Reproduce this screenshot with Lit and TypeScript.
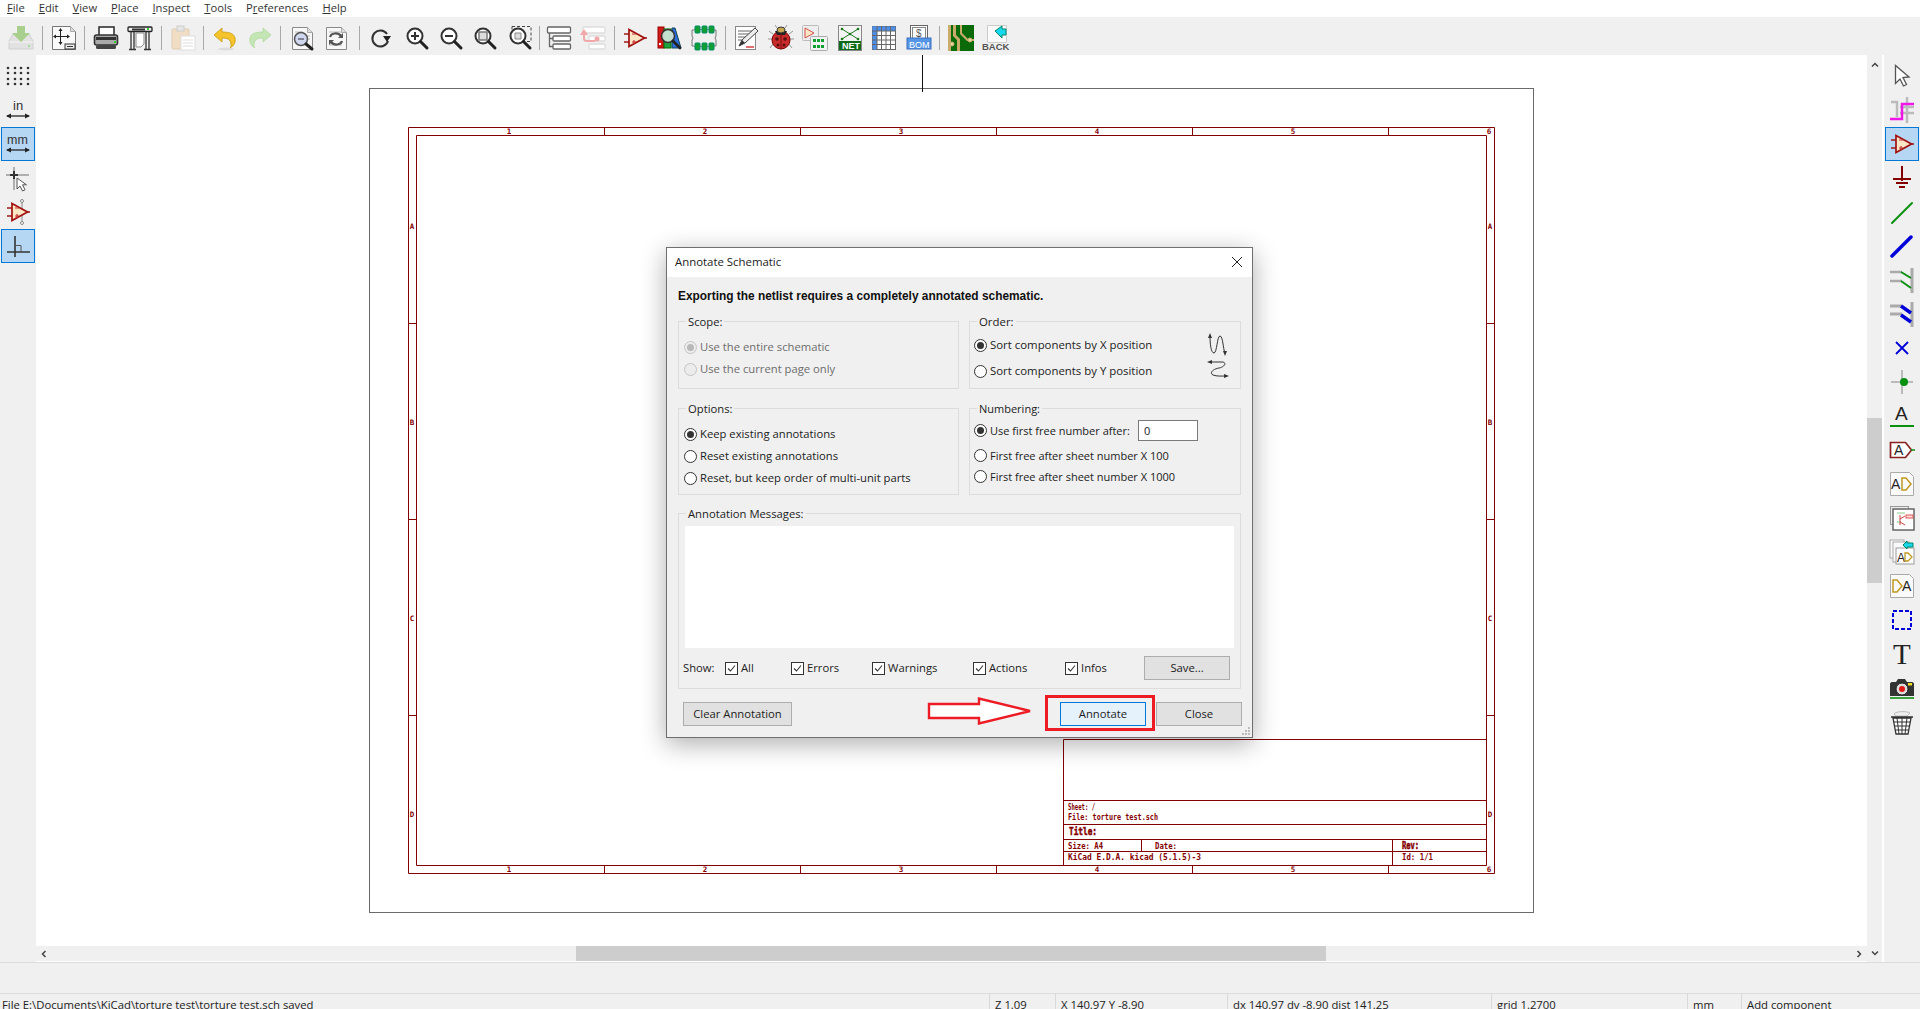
import { LitElement, html, css, svg } from "lit";
import { customElement } from "lit/decorators.js";

const R = "#840000";
const opamp = (dx = 0, dy = 0) => svg`<g transform="translate(${dx} ${dy})">
  <path d="M2 9h5M2 17h5M22 13h3" stroke="#a01818" stroke-width="1.6" fill="none"/>
  <path d="M7 4.5 22.5 13 7 21.5Z" fill="#fbe6c6" stroke="#a01010" stroke-width="1.7"/>
  <path d="M10 9h4M10 17h4M12 15v4" stroke="#c43030" stroke-width="1.2"/></g>`;
const mag = (inner: unknown) => svg`<circle cx="11" cy="11" r="7.5" fill="#fff" stroke="#333" stroke-width="2"/>${inner}
  <path d="M16.5 16.5 23 23" stroke="#222" stroke-width="3" stroke-linecap="round"/>`;
const page = svg`<path d="M3.5 2.5h15l5 5v17h-20Z" fill="#f7f7f7" stroke="#8a8a8a"/><path d="M18.500 2.500v5h5" fill="#ddd" stroke="#aaa"/>`;
const T = (x: number, y: number, s: string, fs: number, fill: string, w = 700) =>
  svg`<text x=${x} y=${y} font-family="Liberation Sans" font-size=${fs} font-weight=${w} fill=${fill}>${s}</text>`;

const I: Record<string, unknown> = {
  save: svg`<path d="M1 16 5 9h16l4 7v8H1Z" fill="#e2e2e2" stroke="#d0d0d0"/><path d="M1 17h24" stroke="#f5f5f5"/><rect x="20" y="20" width="2" height="2" fill="#9fdc9f"/><path d="M9 1h8v7h5l-9 9-9-9h5Z" fill="#a9cf8e"/>`,
  fit: svg`<path d="M1.500 1.500h18l5 5v18h-23Z" fill="#fafafa" stroke="#777"/><path d="M19.500 1.500v5h5" fill="#ddd" stroke="#aaa"/><path d="M9.500 4v15M3 11.500h15" stroke="#222"/><path d="M9.500 3l-2 3h4ZM9.500 20l-2-3h4ZM2 11.500l3-2v4ZM19 11.500l-3-2v4Z" fill="#222"/><rect x="14" y="19" width="10" height="5" fill="#eee" stroke="#333"/><path d="M16 21.500h6" stroke="#333"/>`,
  print: svg`<rect x="6" y="2" width="15" height="9" fill="#fff" stroke="#333" stroke-width="1.6"/><rect x="1.500" y="10" width="23" height="10" rx="2" fill="#aaa" stroke="#333" stroke-width="1.6"/><rect x="3" y="12" width="20" height="3" fill="#333"/><rect x="21" y="16" width="2" height="2" fill="#3c3"/><rect x="3" y="20" width="20" height="4" rx="1.500" fill="#444"/>`,
  plotter: svg`<rect x="1" y="2" width="24" height="4.500" rx="1" fill="#eee" stroke="#222" stroke-width="1.300"/><rect x="5" y="3.500" width="13" height="2" fill="#333"/><rect x="20" y="3" width="2" height="2" fill="#3c3"/><path d="M4 7v17M7 7v17M19 7v17M22 7v17" stroke="#333" stroke-width="1.300"/><path d="M9 8h8v11l-3 3H9Z" fill="#fff" stroke="#888"/><path d="M2 24.500h7M17 24.500h7" stroke="#333" stroke-width="1.500"/>`,
  paste: svg`<rect x="2" y="4" width="17" height="20" rx="1" fill="#f1dcc4" stroke="#e3cdb2"/><rect x="7" y="1" width="7" height="5" fill="#e6e6e6" stroke="#ccc"/><rect x="11" y="11" width="14" height="14" fill="#fff" stroke="#ddd"/><path d="M13 15h10M13 18h10M13 21h10" stroke="#ddd"/>`,
  undo: svg`<path d="M10 3 2 10l8 7v-4c5 0 9 1 9 7 0 1 0 2-1 3 4-2 6-6 5-10-1-5-7-6-13-6Z" fill="#f5c32c" stroke="#c89a10" stroke-width=".8"/><ellipse cx="14" cy="24" rx="8" ry="1.500" fill="#ddd"/>`,
  redo: svg`<path d="M16 3l8 7-8 7v-4c-5 0-9 1-9 7 0 1 0 2 1 3-4-2-6-6-5-10 1-5 7-6 13-6Z" fill="#c4e6b4" stroke="#b0d8a0" stroke-width=".8"/>`,
  find: svg`${page}<path d="M6 7h8M6 10h3M6 13h3M6 16h3M18 11h3M18 14h3" stroke="#bbb"/><circle cx="12" cy="14" r="6.500" fill="#cfd8ee" stroke="#555" stroke-width="1.500"/><path d="M9 14h6" stroke="#667" stroke-width="1.500"/><path d="M17 19l6 5" stroke="#222" stroke-width="3" stroke-linecap="round"/>`,
  replace: svg`${page}<path d="M6 7h13M6 20h13" stroke="#bbb"/><path d="M7 12c1-4 8-5 11-1" fill="none" stroke="#555" stroke-width="2.200"/><path d="M20 8v5h-5Z" fill="#555"/><path d="M19 16c-1 4-8 5-11 1" fill="none" stroke="#555" stroke-width="2.200"/><path d="M6 20v-5h5Z" fill="#555"/>`,
  refresh: svg`<path d="M19 9A8 8 0 1 0 20 16" transform="translate(-1 0)" fill="none" stroke="#333" stroke-width="2"/><path d="M14 11h8l-4 6Z" fill="#222"/>`,
  zin: svg`${mag(svg`<path d="M7 11h8M11 7v8" stroke="#333" stroke-width="2"/>`)}`,
  zout: svg`${mag(svg`<path d="M7 11h8" stroke="#333" stroke-width="2"/>`)}`,
  zfit: svg`${mag(svg`<rect x="7" y="7" width="8" height="8" fill="#ddd" stroke="#777" stroke-width="1.500"/>`)}`,
  zsel: svg`<rect x="5" y="1.500" width="19" height="15" fill="none" stroke="#444" stroke-dasharray="3 2"/>${mag(svg`<path d="M8 8h6v6H8Z" fill="#ddd" stroke="#888"/>`)}`,
  hier: svg`<rect x="1.500" y="2" width="23" height="6" rx="1" fill="#fff" stroke="#666" stroke-width="1.300"/><rect x="7" y="11" width="17.500" height="5" rx="1" fill="#fff" stroke="#666" stroke-width="1.300"/><rect x="7" y="19" width="17.500" height="5" rx="1" fill="#fff" stroke="#666" stroke-width="1.300"/><path d="M3.500 8v13.500H7M3.500 13.500H7" fill="none" stroke="#666" stroke-width="1.300"/>`,
  leave: svg`<rect x="3" y="2" width="22" height="6" rx="1" fill="#fff" stroke="#ddd" stroke-width="1.300"/><rect x="9" y="11" width="16" height="5" rx="1" fill="#fff" stroke="#ddd" stroke-width="1.300"/><rect x="9" y="19" width="16" height="5" rx="1" fill="#fff" stroke="#ddd" stroke-width="1.300"/><path d="M4 8v5.500c0 2 1 2.500 3 2.500h8" fill="none" stroke="#f0a8a8" stroke-width="2"/><path d="M4 4 0 10h8Z" fill="#f0a8a8"/><circle cx="17" cy="14" r="2.500" fill="#f0a8a8"/>`,
  symbol: opamp(0, 0),
  lib: svg`<rect x="1" y="2" width="6" height="21" fill="#d01818" stroke="#900"/><rect x="7" y="4" width="7" height="19" fill="#20a040" stroke="#070"/><path d="M15 23 15 3h3l6 20Z" fill="#2a6fdc" stroke="#145"/><circle cx="11" cy="11" r="6.500" fill="#dff0e8" fill-opacity=".85" stroke="#333" stroke-width="1.500"/><path d="M16 16l7 7" stroke="#222" stroke-width="2.800" stroke-linecap="round"/><rect x="2" y="18" width="2" height="2" fill="#fff"/>`,
  fp: svg`<path d="M3 5H1v6l1 2-1 2v6h2M23 5h2v6l-1 2 1 2v6h-2" fill="none" stroke="#777"/><path d="M3 4.500h20M3 21.500h20" stroke="#888"/>${[4, 11, 18].map((x) => svg`<rect x=${x} y="1" width="5" height="7" rx=".8" fill="#10a030" stroke="#086"/><rect x=${x} y="18" width="5" height="7" rx=".8" fill="#10a030" stroke="#086"/>`)}`,
  annot: svg`<rect x="1.500" y="1.500" width="20" height="23" fill="#fff" stroke="#888"/><path d="M4 6h14M4 9h12M4 12h10M4 15h7" stroke="#666"/><path d="M5 21 8 15 21 3l3 3-13 12Z" fill="#eee" stroke="#444"/><path d="M5 21l3-6 3 3Z" fill="#333"/><path d="M12 22h8" stroke="#d01010" stroke-width="1.200"/>`,
  bug: svg`<path d="M5 9 1 6M4 14H0M5 19l-3 4M21 9l4-3M22 14h4M21 19l3 4M9 3 7 0M17 3l2-3" stroke="#999" fill="none"/><ellipse cx="13" cy="15" rx="9" ry="9" fill="#c92a2a" stroke="#700"/><path d="M7 6h12l-2 4H9Z" fill="#222"/><ellipse cx="13" cy="5" rx="4" ry="3" fill="#c8a850" stroke="#333"/><circle cx="9" cy="14" r="1.800" fill="#511"/><circle cx="17" cy="14" r="1.800" fill="#511"/><circle cx="10" cy="20" r="1.500" fill="#511"/><circle cx="16" cy="20" r="1.500" fill="#511"/><path d="M13 9v15" stroke="#711"/>`,
  assign: svg`<rect x="0.500" y="0.500" width="16" height="15" rx="1" fill="#eee" stroke="#bbb"/><path d="M3 3 12 8 3 13Z" fill="#fbe6c6" stroke="#d05050"/><rect x="8.500" y="11.500" width="17" height="14" rx="1" fill="#f2f2f2" stroke="#aaa"/>${[11, 15, 19].map((x) => svg`<rect x=${x} y="14" width="3" height="3" fill="#10a030"/><rect x=${x} y="20" width="3" height="3" fill="#10a030"/>`)}`,
  net: svg`<rect x="1.500" y="0.500" width="23" height="25" fill="#f4f4f4" stroke="#888"/><path d="M5 4 13 9 21 4M5 14l8-5 8 5" fill="none" stroke="#1a7a1a"/><circle cx="5" cy="4" r="1.300" fill="#1a7a1a"/><circle cx="21" cy="4" r="1.300" fill="#1a7a1a"/><circle cx="13" cy="9" r="1.300" fill="#1a7a1a"/><circle cx="5" cy="14" r="1.300" fill="#1a7a1a"/><circle cx="21" cy="14" r="1.300" fill="#1a7a1a"/><rect x="2" y="16" width="22" height="9" fill="#0c6a18"/>${T(5, 24, "NET", 9, "#fff")}`,
  table: svg`<rect x="1.500" y="1.500" width="23" height="23" fill="#fff" stroke="#666"/><rect x="1.500" y="1.500" width="23" height="4.500" fill="#4d8ee8"/><rect x="1.500" y="1.500" width="4.500" height="23" fill="#4d8ee8"/><path d="M6 1v24M10.500 1v24M15 1v24M19.500 1v24M1 6h24M1 10.500h24M1 15h24M1 19.500h24" stroke="#666"/>`,
  bom: svg`<rect x="4.500" y="0.500" width="17" height="15" fill="#fff" stroke="#666"/><rect x="6.500" y="2.500" width="13" height="11" fill="none" stroke="#888"/>${T(10, 12, "$", 10, "#555", 400)}<rect x="1" y="13" width="24" height="11" fill="#5596e6" stroke="#3a6fc0"/>${T(3, 23, "BOM", 9, "#fff", 400)}`,
  pcb: svg`<rect x="0" y="0" width="26" height="26" fill="#0a6a0a"/><path d="M0 0h3v26H0ZM5 0h3v10l4 4v12H9V15L5 11ZM12 0h2v8l6 6h6v2h-7l-7-7Z" fill="#c9ab6a"/><circle cx="22" cy="15" r="2" fill="#e8d8a8" stroke="#c9ab6a"/><circle cx="4" cy="19" r="2" fill="#e8d8a8" stroke="#c9ab6a"/>`,
  back: svg`<path d="M5.500 0.500h19v17h-19Z" fill="#fafafa" stroke="#ccc"/><path d="M14 6l7-5v3h4v6h-4v3Z" transform="translate(-1 0)" fill="#18d8f0" stroke="#086"/>${T(0, 25, "BACK", 9.500, "#555")}`,
  grid: svg`${[5, 10, 16, 21].map((y) => [3, 10, 16, 23].map((x) => svg`<circle cx=${x} cy=${y} r="1.300" fill="#333"/>`))}`,
  inch: svg`${T(8, 13, "in", 13, "#333", 400)}<path d="M2 19h22" stroke="#222" stroke-width="1.300"/><path d="M1 19l5-2.500v5ZM25 19l-5-2.500v5Z" fill="#222"/>`,
  mm: svg`${T(2, 13, "mm", 12.500, "#333", 400)}<path d="M2 19h22" stroke="#222" stroke-width="1.300"/><path d="M1 19l5-2.500v5ZM25 19l-5-2.500v5Z" fill="#222"/>`,
  cross: svg`<path d="M1 10h23M9 2v23" stroke="#999" stroke-width="1.500"/><path d="M5 10h8M9 6v8" stroke="#333" stroke-width="2"/><path d="M12 13v11l3-3 2.500 5 2.500-1.200-2.500-5h4Z" fill="#fff" stroke="#555"/>`,
  pin: svg`<path d="M17 1v24" stroke="#aaa" stroke-width="1.500"/><circle cx="17" cy="2" r="1.500" fill="#fff" stroke="#888"/><circle cx="17" cy="24" r="1.500" fill="#fff" stroke="#888"/>${opamp(0, 0)}`,
  angle: svg`<path d="M2 19h23M10 3v21" stroke="#333" stroke-width="1.600"/><path d="M10 12.500h6v6.500" fill="none" stroke="#555"/>`,
  arrow: svg`<path d="M6.500 2.500v18l4.500-4.500 3.500 7 3-1.500-3.500-7 6-.5Z" fill="#fff" stroke="#555" stroke-width="1.300"/>`,
  bentry: svg`<path d="M2 5h6v15M18 0v26M11 16h14M11 10h14" stroke="#bbb" stroke-width="2.500" fill="none"/><path d="M1 22h12V7h12" stroke="#f018e8" stroke-width="2.500" fill="none"/>`,
  ground: svg`<path d="M13 1v15M4 14h18M7 18h12M10 22h6" stroke="#840000" stroke-width="2" fill="none"/>`,
  wire: svg`<path d="M3 24 23 4" stroke="#0a9010" stroke-width="2" stroke-linecap="round"/>`,
  bus: svg`<path d="M3 23 22 4" stroke="#0000d8" stroke-width="3.500" stroke-linecap="round"/>`,
  wentry: svg`<path d="M23 1v25" stroke="#aaa" stroke-width="3"/><path d="M1 5h12M1 14h12" stroke="#aaa" stroke-width="2.500"/><path d="M12 5l10 6M12 14l10 7" stroke="#0a9010" stroke-width="2"/>`,
  bbentry: svg`<path d="M23 1v25" stroke="#aaa" stroke-width="3"/><path d="M1 5h12M1 13h12" stroke="#aaa" stroke-width="3"/><path d="M12 5l10 7M12 14l10 7" stroke="#0000d8" stroke-width="3.500"/>`,
  nc: svg`<path d="M7 7l12 12M19 7 7 19" stroke="#0000d8" stroke-width="1.800"/>`,
  junction: svg`<path d="M2 13h22M13 1v24" stroke="#bbb" stroke-width="2"/><circle cx="15" cy="13" r="4" fill="#0a9010"/>`,
  netname: svg`${T(6, 17, "A", 19, "#222", 400)}<path d="M1 23h24" stroke="#0a9010" stroke-width="2"/>`,
  label: svg`<path d="M1.500 5.500h15l6 7.500-6 7.500h-15Z" fill="#fff" stroke="#8a2020" stroke-width="1.700"/><path d="M22 13h4" stroke="#0a9010" stroke-width="1.500"/>${T(5, 18, "A", 14, "#222", 400)}`,
  glabel: svg`<path d="M1.500 1.500h19l4 4v19h-23Z" fill="#fafafa" stroke="#aaa"/>${T(2, 18, "A", 14, "#222", 400)}<path d="M13 7h4l5 6-5 6h-4Z" fill="none" stroke="#c09820" stroke-width="1.500"/>`,
  hsheet: svg`<rect x="1.500" y="1.500" width="18" height="18" fill="#eee" stroke="#999"/><rect x="4" y="4" width="21" height="21" fill="#fff" stroke="#666" stroke-width="1.500"/><path d="M8 8h8M8 17h4" stroke="#8c8"/><path d="M11 10v10M11 14l5-3M11 17l5 3" stroke="#c44"/><rect x="17" y="10" width="7" height="3" fill="#fdd" stroke="#d55"/>`,
  hpin: svg`<rect x="1" y="1" width="14" height="18" fill="#fafafa" stroke="#aaa"/><rect x="4" y="3" width="16" height="20" fill="#fafafa" stroke="#aaa"/><rect x="7" y="9" width="18" height="16" fill="#fff" stroke="#999"/><path d="M18 10l-4-4 4-4v2h6v4h-6Z" fill="#18d8f0" stroke="#086"/>${T(8, 23, "A", 12, "#222", 400)}<path d="M16 14h3l4 4-4 4h-3Z" fill="none" stroke="#c09820" stroke-width="1.300"/>`,
  import: svg`<path d="M1.500 1.500h19l4 4v19h-23Z" fill="#fafafa" stroke="#aaa"/><path d="M4 7h4l5 6-5 6H4Z" fill="none" stroke="#c09820" stroke-width="1.500"/>${T(13, 18, "A", 14, "#222", 400)}`,
  rect: svg`<rect x="4" y="4" width="18" height="18" fill="none" stroke="#0000d8" stroke-width="2" stroke-dasharray="4 2"/>`,
  text: svg`<text x="4" y="23" font-family="Liberation Serif" font-size="29" font-weight="400" fill="#222">T</text>`,
  camera: svg`<path d="M1 9c0-1 1-2 2-2h4l2-3h7l2 3h5c1 0 2 1 2 2v12H1Z" fill="#333"/><rect x="19" y="8" width="4" height="2.500" fill="#f0e020"/><circle cx="13" cy="14" r="6" fill="#ddd" stroke="#222"/><circle cx="13" cy="14" r="3" fill="#e01818"/><path d="M1 23h24" stroke="#0a9010" stroke-width="1.600"/>`,
  trash: svg`<path d="M5 5c2-3 13-3 16-1l-3 3H7Z" fill="#eee" stroke="#bbb"/><path d="M2 8h22M4 9h18l-3 16H7Z" fill="#fff" stroke="#333" stroke-width="1.300"/><path d="M8 9l2 16M13 9v16M18 9l-2 16M5 13h16M6 17h14M6.500 21h13" stroke="#333"/>`,
};

const topBar = ["save", "|", "fit", "|", "print", "plotter", "|", "paste", "|", "undo", "redo", "|", "find", "replace", "|+", "refresh", "zin", "zout", "zfit", "zsel", "|-", "hier", "leave", "|", "symbol", "lib", "fp", "|", "annot", "bug", "assign", "net", "table", "bom", "|", "pcb", "back"];
const leftBar = [["grid"], ["inch"], ["mm", 1], ["cross"], ["pin"], ["angle", 1]];
const rightBar = [["arrow"], ["bentry"], ["symbol", 1], ["ground"], ["wire"], ["bus"], ["wentry"], ["bbentry"], ["nc"], ["junction"], ["netname"], ["label"], ["glabel"], ["hsheet"], ["hpin"], ["import"], ["rect"], ["text"], ["camera"], ["trash"]];
const menus: [string, string, string][] = [["", "F", "ile"], ["", "E", "dit"], ["", "V", "iew"], ["", "P", "lace"], ["", "I", "nspect"], ["", "T", "ools"], ["P", "r", "eferences"], ["", "H", "elp"]];
const ic = (n: string) => html`<svg class="ic" viewBox="0 0 26 26" width="26" height="26">${I[n]}</svg>`;

// Sheet drawing, in page coordinates
const seg: number[][] = [
  [408, 127, 1494, 127], [408, 873, 1494, 873], [408, 127, 408, 873], [1494, 127, 1494, 873],
  [416, 135, 1486, 135], [416, 865, 1486, 865], [416, 135, 416, 865], [1486, 135, 1486, 865],
  ...[604, 800, 996, 1192, 1388].flatMap((x) => [[x, 127, x, 135], [x, 865, x, 873]]),
  ...[323, 519, 715].flatMap((y) => [[408, y, 416, y], [1486, y, 1494, y]]),
  [1063, 739, 1486, 739], [1063, 739, 1063, 865], [1063, 800, 1486, 800], [1063, 824, 1486, 824],
  [1063, 839, 1486, 839], [1063, 851, 1486, 851], [1141, 839, 1141, 851], [1392, 839, 1392, 865],
];
const sheetLabels: [number, number, string][] = [
  ...[1, 2, 3, 4, 5, 6].flatMap((n, i): [number, number, string][] => {
    const x = i === 5 ? 1489 : 509 + i * 196;
    return [[x, 134, String(n)], [x, 872, String(n)]];
  }),
  ...["A", "B", "C", "D"].flatMap((s, i): [number, number, string][] => [[412, 229 + i * 196, s], [1490, 229 + i * 196, s]]),
];
const tb: [number, number, string, number, number][] = [
  [1068, 810, "Sheet: /", 27, 0], [1068, 820, "File: torture test.sch", 90, 0],
  [1068, 849, "Size: A4", 35, 0], [1155, 849, "Date:", 22, 0],
  [1068, 860, "KiCad E.D.A.  kicad (5.1.5)-3", 133, 0], [1402, 860, "Id: 1/1", 31, 0],
  [1069, 835, "Title:", 28, 1], [1402, 849, "Rev:", 17, 1],
];

@customElement("app-root")
export class AppRoot extends LitElement {
  static styles = css`
    :host { display: flex; flex-direction: column; width: 1920px; height: 1009px; overflow: hidden; background: #f0f0f0; font: 11.25px/16px "Open Sans", sans-serif; color: #1a1a1a; }
    * { box-sizing: border-box; }
    .menu { display: flex; height: 17px; flex: none; background: #fff; padding-left: 7px; gap: 14px; line-height: 16px; font-size: 11.2px; color: #333; }
    .menu u { text-underline-offset: 1px; }
    .top { display: flex; align-items: center; height: 38px; flex: none; padding: 3px 0 0 4px; background: #f0f0f0; }
    .btn { width: 34.4px; height: 34px; flex: none; display: flex; align-items: center; justify-content: center; }
    .sep { width: 8px; height: 24px; flex: none; display: flex; justify-content: center; }
    .sep::after { content: ""; width: 1px; background: #a8a8a8; }
    .sep.wide { width: 11.5px; } .sep.thin { width: 4.5px; }
    .mid { flex: 1 1 0; display: flex; min-height: 0; }
    .side { width: 36px; flex: none; padding-top: 4px; display: flex; flex-direction: column; background: #f0f0f0; }
    .side .btn { width: 36px; height: 34px; }
    .side .on::before { content: ""; position: absolute; width: 32px; height: 32px; background: #b6d7f4; border: 1px solid #0078d7; }
    .ic { position: relative; display: block; overflow: visible; }
    .centre { flex: 1; display: flex; flex-direction: column; min-width: 0; }
    .canvas { flex: 1; position: relative; background: #fff; overflow: hidden; min-height: 0; }
    .canvas svg.drawing { position: absolute; inset: 0; font-family: "DejaVu Sans Mono", monospace; }
    .hbar { height: 16px; flex: none; background: #f0f0f0; border-bottom: 1px solid #fff; display: flex; align-items: center; position: relative; }
    .hthumb { position: absolute; left: 540px; width: 750px; top: 0; height: 15px; background: #cdcdcd; }
    .chev { width: 8px; height: 8px; flex: none; }
    .hbar .l { margin-left: 4px; } .hbar .r { margin-left: auto; margin-right: 4px; }
    .vbar { width: 17px; flex: none; background: #f0f0f0; border-right: 2px solid #fff; display: flex; flex-direction: column; align-items: center; justify-content: space-between; padding: 6px 0 5px; position: relative; }
    .vthumb { position: absolute; left: 0; width: 15px; top: 363px; height: 165px; background: #cdcdcd; }
    .gap { height: 32px; flex: none; background: #f0f0f0; border-top: 1px solid #dcdcdc; border-bottom: 1px solid #dcdcdc; }
    .status { height: 15px; flex: none; display: flex; background: #f0f0f0; overflow: hidden; white-space: nowrap; font-size: 11.3px; color: #222; }
    .status div { padding: 3px 0 0 5px; border-left: 1px solid #d9d9d9; flex: none; }
    .status div:first-child { border: 0; padding-left: 2px; width: 989px; }
    .f1 { width: 66px; } .f2 { width: 172px; } .f3 { width: 264px; } .f4 { width: 196px; } .f5 { width: 54px; } .f6 { width: 179px; }

    .dlg { position: absolute; left: 666px; top: 247px; width: 587px; height: 491px; background: #f0f0f0; border: 1px solid #6f6f6f; box-shadow: 0 6px 24px rgba(0,0,0,.32); display: flex; flex-direction: column; color: #222; }
    .title { height: 29px; flex: none; background: #fff; display: flex; align-items: center; justify-content: space-between; padding: 0 9px 2px 8px; font-size: 11.4px; }
    .body { flex: 1; padding: 11px 11px 0; display: flex; flex-direction: column; }
    .head { height: 16px; font: 700 11.9px/16px "Liberation Sans", sans-serif; color: #111; margin-bottom: 17px; }
    .cols { display: grid; grid-template-columns: 281px 272px; column-gap: 10px; margin-bottom: 19px; }
    .cols.tail { margin-bottom: 18px; }
    .grp { position: relative; border: 1px solid #dcdcdc; }
    .lg { position: absolute; top: -8px; left: 7px; background: #f0f0f0; padding: 0 2px; line-height: 16px; }
    .h68 { height: 68px; } .h87 { height: 87px; }
    .p14 { padding: 14px 0 0 5px; } .p10 { padding: 10px 0 0 4px; font-size: 11.4px; } .p12 { padding: 11px 0 0 4px; font-size: 11px; }
    .row { display: flex; align-items: center; gap: 3px; height: 22px; }
    .r26 { height: 26px; padding-right: 11px; }
    .r21 { height: 21px; } .mt4 { margin-top: 4px; }
    .off { color: #6d6d6d; }
    .radio { width: 13px; height: 13px; border-radius: 50%; border: 1px solid #333; background: #fff; flex: none; position: relative; }
    .radio.c::after { content: ""; position: absolute; inset: 2px; border-radius: 50%; background: #333; }
    .off .radio { border-color: #c4c4c4; background: #ececec; }
    .off .radio.c::after { background: #b8b8b8; }
    .push { margin-left: auto; }
    .num { width: 60px; height: 21px; border: 1px solid #7a7a7a; background: #fff; margin-left: auto; margin-right: 42px; padding-left: 5px; line-height: 19px; }
    .msgs { height: 176px; padding: 12px 5px 0 4px; margin-bottom: 13px; }
    .white { height: 122px; margin: 0 1px 8px 2px; background: #fff; }
    .show { display: grid; grid-template-columns: 42px 66px 81px 101px 92px 79px 86px; align-items: center; height: 24px; }
    .cb { display: flex; align-items: center; gap: 3px; }
    .box { width: 13px; height: 13px; border: 1px solid #333; background: #fff; display: block; flex: none; }
    button { font: inherit; color: #222; height: 24px; background: #e1e1e1; border: 1px solid #adadad; padding: 0; display: block; }
    .foot { display: flex; padding-left: 5px; margin-right: -1px; gap: 10px; }
    .foot .clear { width: 109px; margin-right: auto; }
    .foot .b86 { width: 86px; }
    .foot .def { background: #e5f1fb; border-color: #0078d7; }
    .redbox { position: absolute; left: 378px; top: 447px; width: 110px; height: 36px; border: 3px solid #ed1c24; }
    .arrow { position: absolute; left: 260px; top: 449px; }
    .grip { position: absolute; right: 1px; bottom: 1px; }
  `;

  side(items: unknown[][]) {
    return items.map(([n, on]) => html`<div class="btn ${on ? "on" : ""}">${ic(n as string)}</div>`);
  }

  render() {
    const chev = (d: string, c: string) => html`<svg class="chev ${c}" viewBox="0 0 8 8"><path d=${d} fill="none" stroke="#444" stroke-width="1.500"/></svg>`;
    const radio = (label: string, c = false, cls = "") => html`<div class="row ${cls}"><span class="radio ${c ? "c" : ""}"></span>${label}</div>`;
    const check = (label: string) => html`<div class="cb"><svg class="box" viewBox="0 0 11 11"><path d="M2 5.500 4.500 8 9 2.500" fill="none" stroke="#333" stroke-width="1.100"/></svg>${label}</div>`;
    const sepClass: Record<string, string> = { "|": "sep", "|+": "sep wide", "|-": "sep thin" };
    return html`
      <div class="menu">${menus.map(([a, u, b]) => html`<span>${a}<u>${u}</u>${b}</span>`)}</div>
      <div class="top">${topBar.map((n) => (sepClass[n] ? html`<div class=${sepClass[n]}></div>` : html`<div class="btn">${ic(n)}</div>`))}</div>
      <div class="mid">
        <div class="side">${this.side(leftBar)}</div>
        <div class="centre">
          <div class="canvas">
            <svg class="drawing" width="1831" height="891" viewBox="36 55 1831 891">
              <rect x="369.500" y="88.500" width="1164" height="824" fill="none" stroke="#6a6a6a"/>
              <path d="M922.500 55v37" stroke="#111"/>
              ${seg.map(([a, b, c, d]) => svg`<line x1=${a + 0.5} y1=${b + 0.5} x2=${c + 0.5} y2=${d + 0.5} stroke=${R}/>`)}
              ${sheetLabels.map(([x, y, s]) => svg`<text x=${x} y=${y} text-anchor="middle" font-size="7.5" font-weight="700" fill=${R}>${s}</text>`)}
              ${tb.map(([x, y, s, w, b]) => svg`<text x=${x} y=${y} font-size=${b ? 10 : 8} font-weight=${b ? 700 : 700} stroke=${b ? R : "none"} stroke-width=${b ? 0.5 : 0} textLength=${w} lengthAdjust="spacingAndGlyphs" fill=${R}>${s}</text>`)}
            </svg>
          </div>
          <div class="hbar">${chev("M5.500 1 2.500 4l3 3", "l")}<div class="hthumb"></div>${chev("M2.500 1l3 3-3 3", "r")}</div>
        </div>
        <div class="vbar">${chev("M1 5.500 4 2.500l3 3", "")}<div class="vthumb"></div>${chev("M1 2.500 4 5.500l3-3", "")}</div>
        <div class="side">${this.side(rightBar)}</div>
      </div>
      <div class="gap"></div>
      <div class="status">
        <div>File E:\\Documents\\KiCad\\torture test\\torture test.sch saved</div>
        <div class="f1">Z 1.09</div><div class="f2">X 140.97  Y -8.90</div>
        <div class="f3">dx 140.97  dy -8.90  dist 141.25</div><div class="f4">grid 1.2700</div>
        <div class="f5">mm</div><div class="f6">Add component</div>
      </div>

      <div class="dlg">
        <div class="title">Annotate Schematic
          <svg width="12" height="12" viewBox="0 0 12 12"><path d="M1 1l10 10M11 1 1 11" stroke="#222"/></svg>
        </div>
        <div class="body">
          <div class="head">Exporting the netlist requires a completely annotated schematic.</div>
          <div class="cols">
            <div class="grp h68 p14"><span class="lg">Scope:</span>
              ${radio("Use the entire schematic", true, "off")}${radio("Use the current page only", false, "off")}</div>
            <div class="grp h68 p10"><span class="lg">Order:</span>
              <div class="row r26"><span class="radio c"></span>Sort components by X position
                <svg class="push" width="22" height="24" viewBox="0 0 22 24"><path d="M3 3c0 8 1 17 4 17S10 3 13 3s3 13 5 17" fill="none" stroke="#333"/><path d="M3 0 1 5h4ZM18 23l-2-5h4Z" fill="#333"/></svg></div>
              <div class="row r26"><span class="radio"></span>Sort components by Y position
                <svg class="push" width="22" height="24" viewBox="0 0 22 24"><path d="M3 3h12c5 0 3 5-3 6S2 14 6 16c4 1.500 8 1 14 1" fill="none" stroke="#333"/><path d="M0 3l5-2v4ZM22 17l-5-2v4Z" fill="#333"/></svg></div>
            </div>
          </div>
          <div class="cols tail">
            <div class="grp h87 p14"><span class="lg">Options:</span>
              ${radio("Keep existing annotations", true)}${radio("Reset existing annotations")}${radio("Reset, but keep order of multi-unit parts")}</div>
            <div class="grp h87 p12"><span class="lg">Numbering:</span>
              <div class="row r21"><span class="radio c"></span>Use first free number after:<span class="num">0</span></div>
              ${radio("First free after sheet number X 100", false, "r21 mt4")}${radio("First free after sheet number X 1000", false, "r21")}</div>
          </div>
          <div class="grp msgs"><span class="lg">Annotation Messages:</span>
            <div class="white"></div>
            <div class="show"><span>Show:</span>${check("All")}${check("Errors")}${check("Warnings")}${check("Actions")}${check("Infos")}<button>Save...</button></div>
          </div>
          <div class="foot"><button class="clear">Clear Annotation</button><button class="b86 def">Annotate</button><button class="b86">Close</button></div>
        </div>
        <div class="redbox"></div>
        <svg class="arrow" width="106" height="28" viewBox="0 0 106 28"><path d="M2 7h50V1.500L103 14 52 26.500V21H2Z" fill="#fff" stroke="#ed1c24" stroke-width="2.400"/></svg>
        <svg class="grip" width="10" height="10" viewBox="0 0 10 10"><path d="M7 1h2v2H7ZM4 4h2v2H4ZM7 4h2v2H7ZM1 7h2v2H1ZM4 7h2v2H4ZM7 7h2v2H7Z" fill="#bbb"/></svg>
      </div>
    `;
  }
}
